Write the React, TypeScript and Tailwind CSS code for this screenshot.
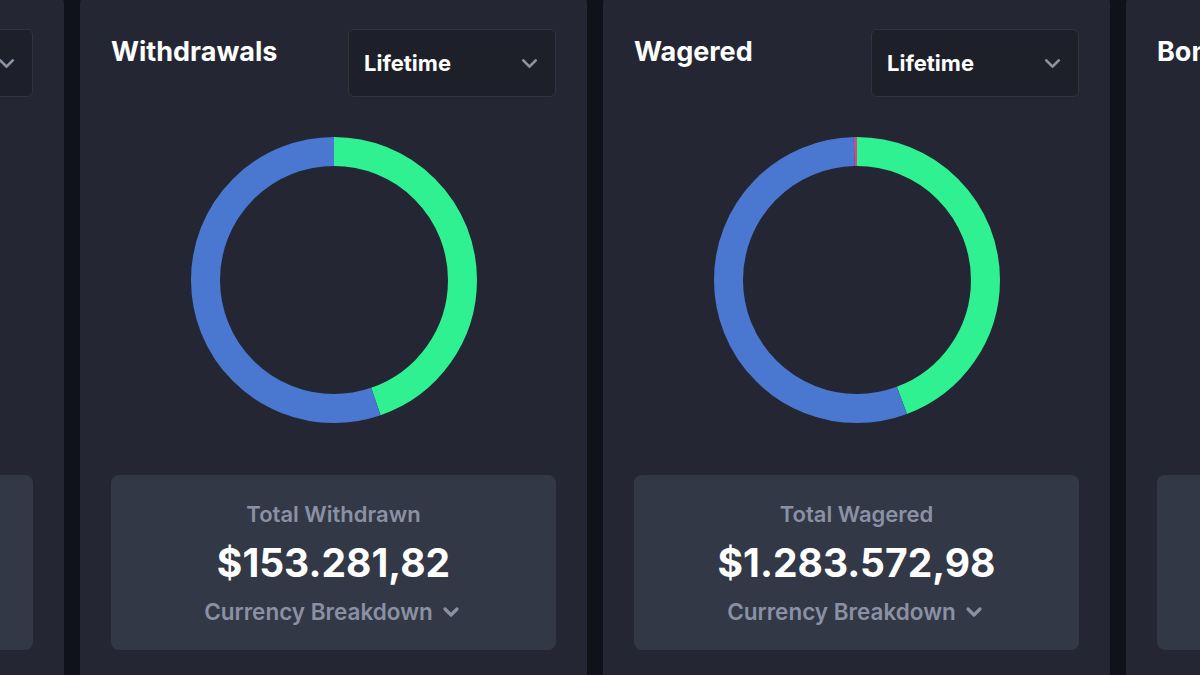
import { ChevronDown } from 'lucide-react'

type Segment = { value: number; color: string }

type Stat = {
  title: string
  label: string
  total: string
  segments: Segment[]
}

const stats: Stat[] = [
  {
    title: 'Deposits',
    label: 'Total Deposited',
    total: '$201.448,10',
    segments: [
      { value: 0.46, color: '#2ff192' },
      { value: 0.54, color: '#4a78d1' },
    ],
  },
  {
    title: 'Withdrawals',
    label: 'Total Withdrawn',
    total: '$153.281,82',
    segments: [
      { value: 0.447, color: '#2ff192' },
      { value: 0.553, color: '#4a78d1' },
    ],
  },
  {
    title: 'Wagered',
    label: 'Total Wagered',
    total: '$1.283.572,98',
    segments: [
      { value: 0.443, color: '#2ff192' },
      { value: 0.553, color: '#4a78d1' },
      { value: 0.004, color: '#c2508a' },
    ],
  },
  {
    title: 'Bonuses',
    label: 'Total Bonuses',
    total: '$12.904,50',
    segments: [
      { value: 0.5, color: '#2ff192' },
      { value: 0.5, color: '#4a78d1' },
    ],
  },
]

function Donut({ segments }: { segments: Segment[] }) {
  const size = 286
  const stroke = 29
  const r = (size - stroke) / 2
  const c = 2 * Math.PI * r
  let offset = 0

  return (
    <svg width={size} height={size} viewBox={`0 0 ${size} ${size}`} aria-hidden>
      <g transform={`rotate(-90 ${size / 2} ${size / 2})`}>
        {segments.map((s, i) => {
          const len = s.value * c
          const el = (
            <circle
              key={i}
              cx={size / 2}
              cy={size / 2}
              r={r}
              fill="none"
              stroke={s.color}
              strokeWidth={stroke}
              strokeDasharray={`${len} ${c - len}`}
              strokeDashoffset={-offset}
            />
          )
          offset += len
          return el
        })}
      </g>
    </svg>
  )
}

function StatCard({ stat }: { stat: Stat }) {
  return (
    <section className="flex h-[700px] w-[507px] shrink-0 flex-col rounded-[10px] bg-[#242733] px-[31px] pt-[35px]">
      <div className="flex items-start justify-between">
        <h2 className="mt-[7px] text-[27px] leading-8 font-bold text-white">{stat.title}</h2>
        <button className="flex h-[68px] w-[208px] items-center justify-between rounded-md border border-[#30343f] bg-[#1d2029] pr-[13px] pl-[15px]">
          <span className="text-[22px] font-bold text-white">Lifetime</span>
          <ChevronDown size={25} strokeWidth={2.6} className="text-[#8e93a3]" />
        </button>
      </div>

      <div className="mt-[40px] flex justify-center">
        <Donut segments={stat.segments} />
      </div>

      <div className="mt-[52px] flex h-[175px] flex-col items-center rounded-lg bg-[#333846] pt-[25px]">
        <p className="text-[22px] leading-7 font-semibold text-[#8b91a4]">{stat.label}</p>
        <p className="mt-[11px] text-[39px] leading-[48px] font-bold text-white">{stat.total}</p>
        <button className="mt-[11px] flex items-center gap-[6px] text-[22.5px] leading-7 font-semibold text-[#8b91a4]">
          Currency Breakdown
          <ChevronDown size={24} strokeWidth={3.2} />
        </button>
      </div>
    </section>
  )
}

export default function App() {
  return (
    <div className="h-[675px] w-[1200px] overflow-hidden bg-[#0f1219] font-['Inter',sans-serif]">
      <div className="-mt-[6px] -ml-[443px] flex gap-4">
        {stats.map((s) => (
          <StatCard key={s.title} stat={s} />
        ))}
      </div>
    </div>
  )
}
